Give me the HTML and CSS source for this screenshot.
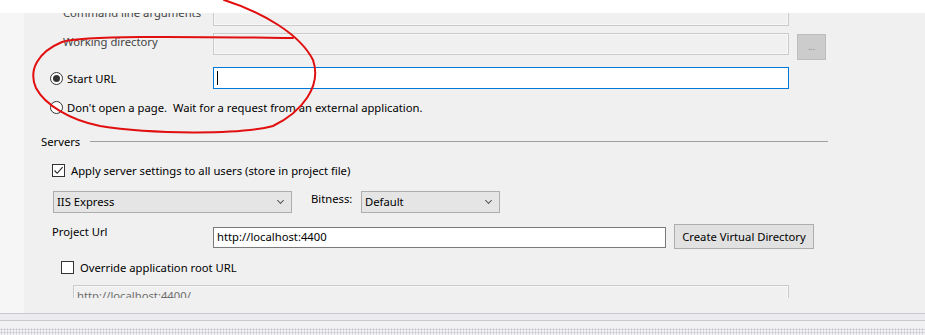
FILE: index.html
```html
<!DOCTYPE html>
<html>
	<head>
		<meta charset="UTF-8">
		<title>Web</title>
		<link rel="stylesheet" href="styles.css">
	</head>
	<body>
		<div class="topbar"></div>
		<div class="main">
			<div class="gutter"></div>
			<div class="panel">
				<div class="viewport">
					<div class="launch">
						<div class="row">
							<span class="label dim">Command line arguments</span>
							<div class="box disabled"></div>
						</div>
						<div class="row gap7">
							<span class="label dim">Working directory</span>
							<div class="box disabled"></div>
							<button class="browse" type="button">...</button>
						</div>
						<div class="row radio-row gap12">
							<label class="radio-label"><span class="radio on"></span>Start URL</label>
							<div class="box focus"><span class="caret"></span></div>
						</div>
						<div class="row radio-row gap7">
							<label class="radio-label wide"><span class="radio"></span>Don't open a page.&nbsp; Wait for a request from an external application.</label>
						</div>
					</div>

					<div class="group-head">
						<span>Servers</span>
						<span class="rule"></span>
					</div>

					<label class="check-row apply">
						<span class="check on">
							<svg width="11" height="11" viewBox="0 0 11 11"><path d="M1.5 5.5 L4.2 8.3 L9.6 2.2" fill="none" stroke="#222" stroke-width="1.1"/></svg>
						</span>
						Apply server settings to all users (store in project file)
					</label>

					<div class="select-row">
						<div class="combo iis">IIS Express<span class="chev"></span></div>
						<span class="bitness">Bitness:</span>
						<div class="combo bits">Default<span class="chev"></span></div>
					</div>

					<div class="url-row">
						<span class="url-label">Project Url</span>
						<div class="box url">http://localhost:4400</div>
						<button class="vdir" type="button">Create Virtual Directory</button>
					</div>

					<label class="check-row override">
						<span class="check"></span>
						Override application root URL
					</label>

					<div class="box root disabled">http://localhost:4400/</div>
				</div>
			</div>
		</div>
		<div class="statusbar">
			<div class="strip"></div>
			<div class="strip2"></div>
			<div class="dots"></div>
		</div>

		<svg class="scribble" width="925" height="335" viewBox="0 0 925 335">
			<path d="M224 0 C262 12 300 34 313 60 C322 86 302 112 273 126 C240 135 150 134 100 126 C70 120 45 105 36 88 C28 70 38 52 62 42 C85 35 200 37 293 38" fill="none" stroke="#e10f0f" stroke-width="2" stroke-linecap="round"/>
		</svg>
	</body>
</html>
```

FILE: styles.css
```css
*{
	padding: 0;
	margin: 0;
	box-sizing: border-box;
}
body{
	width: 925px;
	height: 335px;
	overflow: hidden;
	background: #f0f0f0;
	font-family: "Noto Sans", "Open Sans", sans-serif;
	font-size: 11.25px;
	color: #000;
	position: relative;
}
.topbar{
	height: 13px;
	background: #fff;
}
.main{
	display: flex;
	height: 300px;
}
.gutter{
	width: 24px;
	background: #f6f6f6;
}
.panel{
	flex: 1;
	background: #f0f0f0;
	padding-bottom: 15px;
}
.viewport{
	height: 285px;
	overflow: hidden;
}
.launch{
	margin-top: -9px;
}
.row{
	display: flex;
	align-items: flex-start;
	height: 22px;
	padding-left: 39px;
}
.gap7{
	margin-top: 7px;
}
.gap12{
	margin-top: 12px;
}
.label{
	width: 150px;
	line-height: 16px;
	margin-top: 1px;
}
.dim{
	color: #444;
}
.box{
	height: 22px;
	border: 1px solid #7a7a7a;
	background: #fff;
	padding-left: 3px;
	line-height: 19px;
	white-space: nowrap;
	overflow: hidden;
}
.launch .box{
	width: 576px;
}
.box.disabled{
	background: #f0f0f0;
	border-color: #cacaca;
	box-shadow: inset 0 0 0 1px #f7f7f7;
	color: #6d6d6d;
}
.box.focus{
	border-color: #0078d7;
}
.caret{
	display: inline-block;
	width: 1px;
	height: 14px;
	margin-top: 3px;
	background: #000;
}
.browse{
	width: 29px;
	height: 26px;
	margin-top: 1px;
	margin-left: 8px;
	border: 1px solid #bdbdbd;
	background: #cccccc;
	color: #8a8a8a;
	font-family: inherit;
	font-size: 9px;
	line-height: 22px;
}
.radio-row{
	padding-left: 26px;
}
.radio-label{
	display: flex;
	align-items: center;
	width: 163px;
	height: 22px;
	white-space: nowrap;
}
.radio-label.wide{
	width: auto;
}
.radio{
	flex-shrink: 0;
	width: 13px;
	height: 13px;
	border: 1px solid #333;
	border-radius: 50%;
	background: #fff;
	margin-right: 4px;
	display: flex;
	align-items: center;
	justify-content: center;
}
.radio.on::after{
	content: "";
	width: 7px;
	height: 7px;
	border-radius: 50%;
	background: #333;
}
.group-head{
	display: flex;
	align-items: center;
	width: 787px;
	height: 16px;
	margin-top: 15px;
	margin-left: 17px;
}
.rule{
	flex: 1;
	height: 1px;
	margin-left: 10px;
	background: #a0a0a0;
}
.check-row{
	display: flex;
	align-items: center;
	height: 16px;
	white-space: nowrap;
}
.check{
	flex-shrink: 0;
	width: 13px;
	height: 13px;
	border: 1px solid #333;
	background: #fff;
	margin-right: 6px;
	display: flex;
	align-items: center;
	justify-content: center;
}
.apply{
	margin-top: 13px;
	margin-left: 28px;
}
.override{
	margin-top: 10px;
	margin-left: 37px;
}
.select-row{
	display: flex;
	align-items: flex-start;
	height: 22px;
	margin-top: 13px;
	margin-left: 29px;
}
.combo{
	position: relative;
	height: 22px;
	border: 1px solid #adadad;
	background: #e5e5e5;
	padding-left: 3px;
	line-height: 20px;
}
.iis{
	width: 239px;
}
.bits{
	width: 139px;
}
.chev{
	position: absolute;
	right: 8px;
	top: 6px;
	width: 5px;
	height: 5px;
	border-right: 1px solid #555;
	border-bottom: 1px solid #555;
	transform: rotate(45deg);
}
.bitness{
	width: 50px;
	margin-left: 19px;
	line-height: 16px;
}
.url-row{
	display: flex;
	align-items: flex-start;
	height: 25px;
	margin-top: 11px;
	margin-left: 28px;
}
.url-label{
	width: 161px;
	line-height: 16px;
}
.box.url{
	width: 453px;
	height: 21px;
	margin-top: 3px;
	line-height: 18px;
}
.vdir{
	width: 140px;
	height: 25px;
	margin-left: 8px;
	border: 1px solid #adadad;
	background: #e1e1e1;
	font-family: inherit;
	font-size: 11.25px;
	color: #000;
}
.box.root{
	width: 716px;
	margin-top: 10px;
	margin-left: 49px;
}
.statusbar{
	height: 22px;
}
.strip{
	height: 7px;
	border-top: 1px solid #c8c8ce;
	background: #ececf0;
}
.strip2{
	height: 8px;
	border-top: 1px solid #c8c8ce;
	background: #f2f2f4;
}
.dots{
	height: 7px;
	background-color: #f2f2f4;
	background-image: radial-gradient(circle, #c2c2ca 0.9px, transparent 1.1px);
	background-size: 3px 3px;
}
.scribble{
	position: absolute;
	left: 0;
	top: 0;
	pointer-events: none;
}
```
